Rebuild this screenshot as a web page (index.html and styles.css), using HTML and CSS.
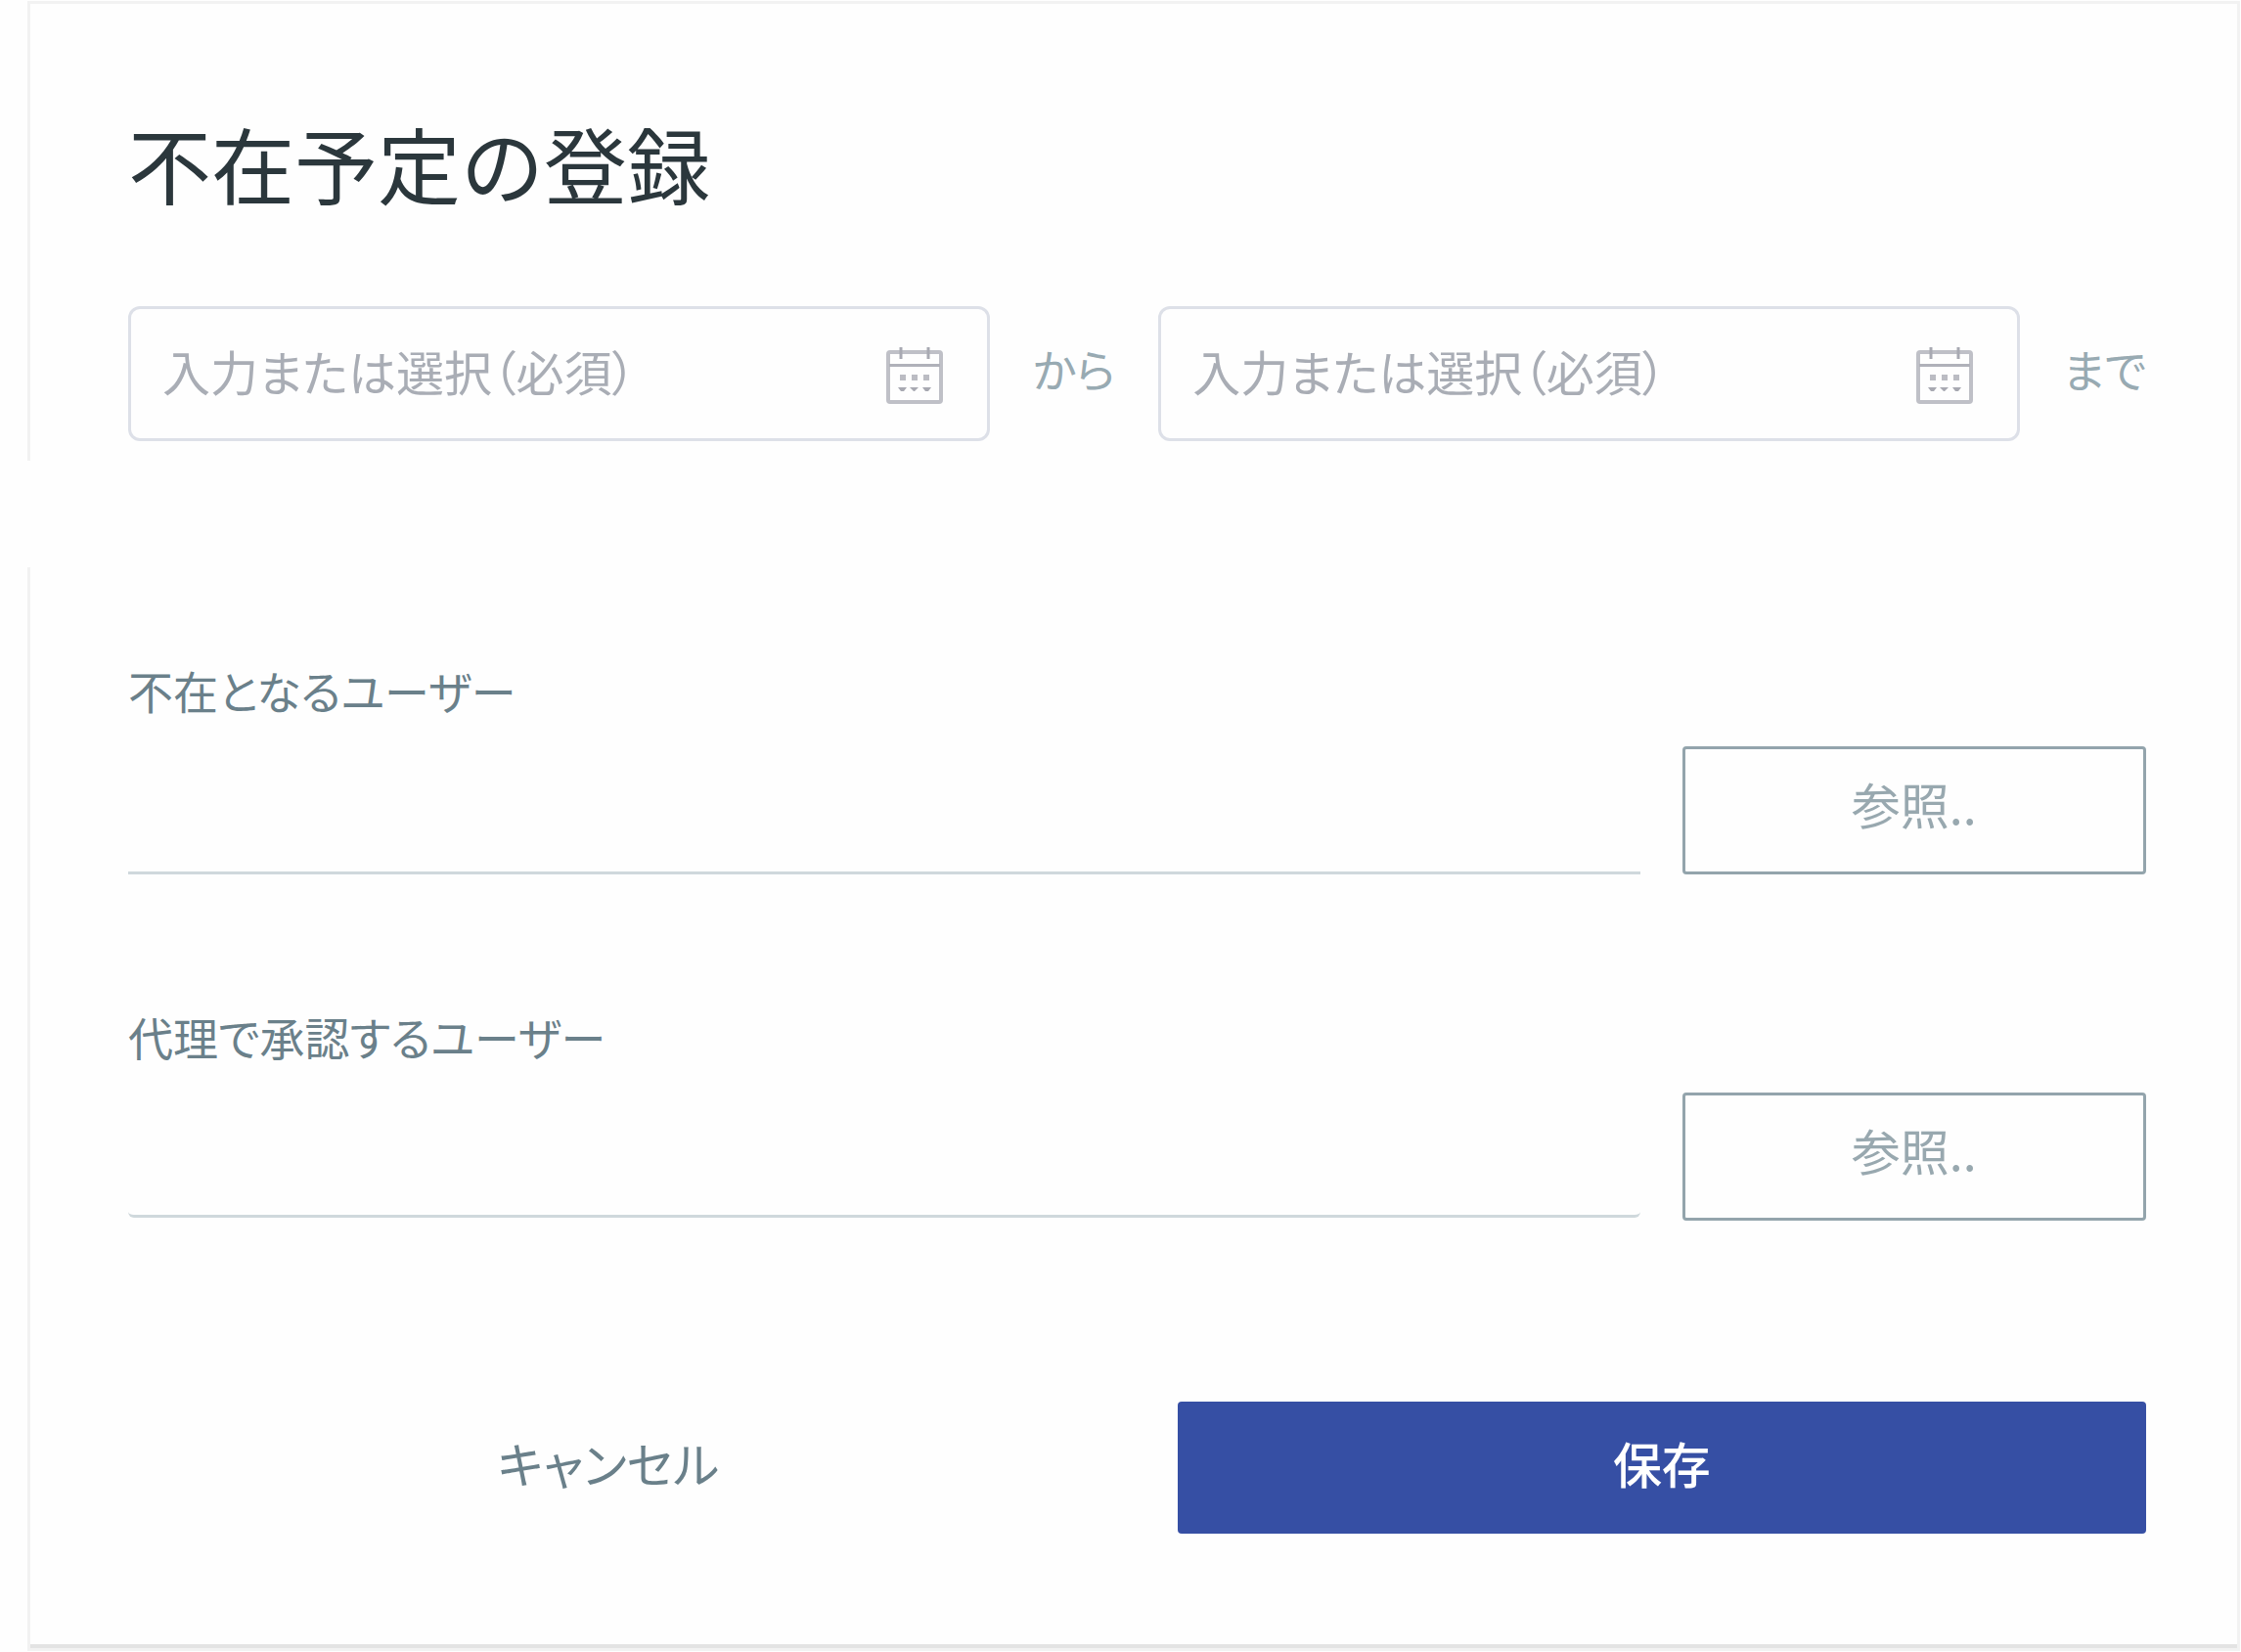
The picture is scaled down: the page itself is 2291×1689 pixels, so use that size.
FILE: index.html
```html
<!DOCTYPE html>
<html lang="ja">
<head>
  <title>不在予定の登録</title>
  <meta charset="UTF-8">
  <link rel="stylesheet" href="styles.css">
</head>
<body>
  <form class="card">
    <h1 class="title">不在予定の登録</h1>

    <div class="period">
      <div class="date-box">
        <input type="text" id="dateFrom" class="date-input" placeholder="入力または選択（必須）">
        <svg class="calendar" viewBox="0 0 58 58">
          <rect x="2" y="5" width="54" height="51" rx="2" fill="none" stroke="#bfc0c7" stroke-width="4"/>
          <path d="M3 18.500H55" stroke="#b0b1b9" stroke-width="3"/>
          <path d="M15 0V12M43 0V12" stroke="#a8a9b2" stroke-width="3"/>
          <path d="M14 31h6M26 31h6M38 31h6" stroke="#bbbcc3" stroke-width="6"/>
          <path d="M12 41h9l-3 4h-3zM24 41h9l-4 4h-1zM37 41h9l-3 4h-3z" fill="#a8a9b2"/>
        </svg>
      </div>
      <label class="period-label" for="dateFrom">から</label>
      <div class="date-box">
        <input type="text" id="dateTo" class="date-input" placeholder="入力または選択（必須）">
        <svg class="calendar" viewBox="0 0 58 58">
          <rect x="2" y="5" width="54" height="51" rx="2" fill="none" stroke="#bfc0c7" stroke-width="4"/>
          <path d="M3 18.500H55" stroke="#b0b1b9" stroke-width="3"/>
          <path d="M15 0V12M43 0V12" stroke="#a8a9b2" stroke-width="3"/>
          <path d="M14 31h6M26 31h6M38 31h6" stroke="#bbbcc3" stroke-width="6"/>
          <path d="M12 41h9l-3 4h-3zM24 41h9l-4 4h-1zM37 41h9l-3 4h-3z" fill="#a8a9b2"/>
        </svg>
      </div>
      <label class="period-label" for="dateTo">まで</label>
    </div>

    <div class="break"></div>

    <div class="field">
      <label class="field-label" for="absentUser">不在となるユーザー</label>
      <div class="field-row">
        <input type="text" id="absentUser" class="field-input">
        <button type="button" class="btn btn-browse">参照..</button>
      </div>
    </div>

    <div class="field">
      <label class="field-label" for="proxyUser">代理で承認するユーザー</label>
      <div class="field-row">
        <input type="text" id="proxyUser" class="field-input field-input-rounded">
        <button type="button" class="btn btn-browse">参照..</button>
      </div>
    </div>

    <div class="actions">
      <button type="button" class="btn btn-cancel">キャンセル</button>
      <button type="submit" class="btn btn-save">保存</button>
    </div>
  </form>
</body>
</html>
```

FILE: styles.css
```css
* {
  margin: 0;
  padding: 0;
  box-sizing: border-box;
}

body {
  font-family: "Noto Sans CJK JP", sans-serif;
  font-feature-settings: "palt";
  background: #fefefe;
  color: #2b373c;
}

input,
button {
  font-family: inherit;
  font-feature-settings: inherit;
  background: transparent;
  border: none;
  outline: none;
}

.card {
  margin: 1px 1px 1px 28px;
  padding: 112px 93px 117px 100px;
  border: 3px solid #f2f2f2;
  box-shadow: inset 0 -4px 0 #e3e3e3;
}

.title {
  font-size: 85px;
  line-height: 100px;
  font-weight: 400;
  font-feature-settings: normal;
  margin-bottom: 97px;
}

.period {
  display: flex;
  align-items: center;
  gap: 44px;
}

.date-box {
  flex: 1;
  min-width: 0;
  height: 138px;
  padding: 0 45px 0 32px;
  display: flex;
  align-items: center;
  border: 3px solid #dde0e8;
  border-radius: 12px;
}

.date-input {
  flex: 1;
  min-width: 0;
  height: 100px;
  padding-bottom: 8px;
  font-size: 49px;
  color: #2b373c;
}

.date-input::placeholder {
  color: #a9adb5;
  opacity: 1;
}

.calendar {
  width: 58px;
  height: 58px;
  margin-top: 4px;
}

.period-label {
  font-size: 46px;
  line-height: 60px;
  padding-bottom: 12px;
  color: #98aab2;
}

/* blank band between the period and the users, it also covers the card's left edge */
.break {
  height: 109px;
  margin: 20px 0 95px -131px;
  background: #fefefe;
}

.field {
  margin-bottom: 135px;
}

.field-label {
  display: block;
  font-size: 46px;
  line-height: 60px;
  color: #6a808a;
  margin-bottom: 28px;
}

.field-row {
  display: flex;
  gap: 43px;
}

.field-input {
  flex: 1;
  min-width: 0;
  font-size: 50px;
  border-bottom: 3px solid #cfd8dc;
}

.field-input-rounded {
  margin-bottom: 3px;
  border-radius: 6px;
}

.btn {
  font-size: 50px;
  line-height: 60px;
  padding-bottom: 12px;
  border-radius: 4px;
  cursor: pointer;
}

.btn-browse {
  width: 23%;
  height: 131px;
  padding-bottom: 16px;
  border: 3px solid #93a4ac;
  color: #98a8af;
}

.actions {
  display: flex;
  gap: 91px;
  margin-top: 185px;
}

.btn-cancel {
  flex: 1;
  height: 135px;
  color: #6a808a;
}

.btn-save {
  width: 48%;
  height: 135px;
  background: #364fa4;
  color: #fff;
  font-weight: 500;
}
```
